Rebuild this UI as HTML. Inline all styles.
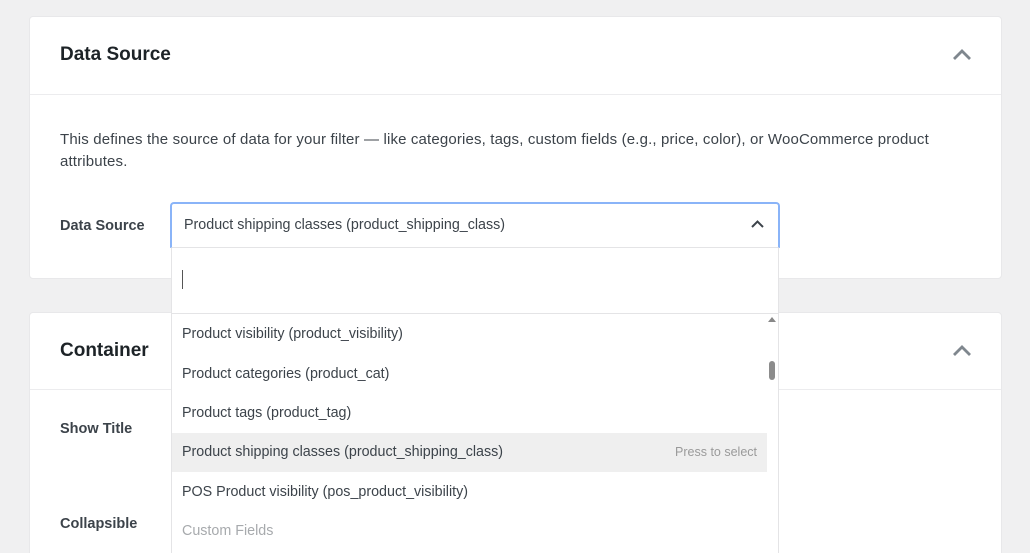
<!DOCTYPE html>
<html><head><meta charset="utf-8"><style>
*{box-sizing:border-box;margin:0;padding:0}
html,body{width:1030px;height:553px;overflow:hidden}
body{background:#f0f0f1;font-family:"Liberation Sans",sans-serif;position:relative;color:#3c434a}
.card{position:absolute;left:29px;width:973px;background:#fff;border-radius:4px;border:1px solid #e8e8ea}
.h{position:absolute;left:60px;font-size:19px;font-weight:bold;color:#1d2327}
.chev{position:absolute;width:22px;height:14px}
.lbl{position:absolute;left:60px;font-size:14.5px;font-weight:bold;color:#3c434a}
.item{position:absolute;left:172px;width:595px;height:39px;font-size:14.3px;color:#3c434a;padding-left:10px;line-height:39px}
</style></head><body>
<div class="card" style="top:16px;height:263px"></div>
<div style="position:absolute;left:30px;top:94px;width:971px;height:1px;background:#ececee"></div>
<div class="h" style="top:44px">Data Source</div>
<svg class="chev" style="left:951px;top:48px" viewBox="0 0 22 14"><path d="M3 11 L11 3 L19 11" fill="none" stroke="#7f878e" stroke-width="2.8"/></svg>
<div style="position:absolute;left:60px;top:129px;width:900px;font-size:15px;letter-spacing:0.15px;line-height:22px;color:#3c434a">This defines the source of data for your filter — like categories, tags, custom fields (e.g., price, color), or WooCommerce product attributes.</div>
<div class="lbl" style="top:218px">Data Source</div>

<div class="card" style="top:312px;height:260px"></div>
<div style="position:absolute;left:30px;top:389px;width:971px;height:1px;background:#ececee"></div>
<div class="h" style="top:340px">Container</div>
<svg class="chev" style="left:951px;top:344px" viewBox="0 0 22 14"><path d="M3 11 L11 3 L19 11" fill="none" stroke="#7f878e" stroke-width="2.8"/></svg>
<div class="lbl" style="top:421px">Show Title</div>
<div class="lbl" style="top:516px">Collapsible</div>

<div style="position:absolute;left:170px;top:202px;width:610px;height:46px;border:2px solid #8ab4f8;border-bottom:1px solid #e4e4e6;border-radius:4px 4px 0 0;background:#fff"></div>
<div style="position:absolute;left:184px;top:217px;font-size:14.3px;color:#3c434a">Product shipping classes (product_shipping_class)</div>
<svg style="position:absolute;left:750px;top:219px;width:15px;height:10px" viewBox="0 0 15 10"><path d="M2 8 L7.5 2.5 L13 8" fill="none" stroke="#3c434a" stroke-width="2"/></svg>
<div style="position:absolute;left:171px;top:248px;width:608px;height:320px;background:#fff;border:1px solid #e4e4e6;border-top:none"></div>
<div style="position:absolute;left:171px;top:313px;width:608px;height:1px;background:#e4e4e6"></div>
<div style="position:absolute;left:182px;top:270px;width:1px;height:19px;background:#555"></div>
<svg style="position:absolute;left:768px;top:316px;width:8px;height:6px" viewBox="0 0 8 6"><path d="M0 6 L4 1 L8 6Z" fill="#888"/></svg>
<div style="position:absolute;left:769px;top:361px;width:6px;height:19px;border-radius:3px;background:#8c8c8c"></div>
<div class="item" style="top:315px">Product visibility (product_visibility)</div>
<div class="item" style="top:355px">Product categories (product_cat)</div>
<div class="item" style="top:394px">Product tags (product_tag)</div>
<div class="item" style="top:433px;background:#efefef">Product shipping classes (product_shipping_class)<span style="position:absolute;right:10px;font-size:12.5px;color:#9a9a9a">Press to select</span></div>
<div class="item" style="top:473px">POS Product visibility (pos_product_visibility)</div>
<div class="item" style="top:512px;color:#a7aaad">Custom Fields</div>
</body></html>
